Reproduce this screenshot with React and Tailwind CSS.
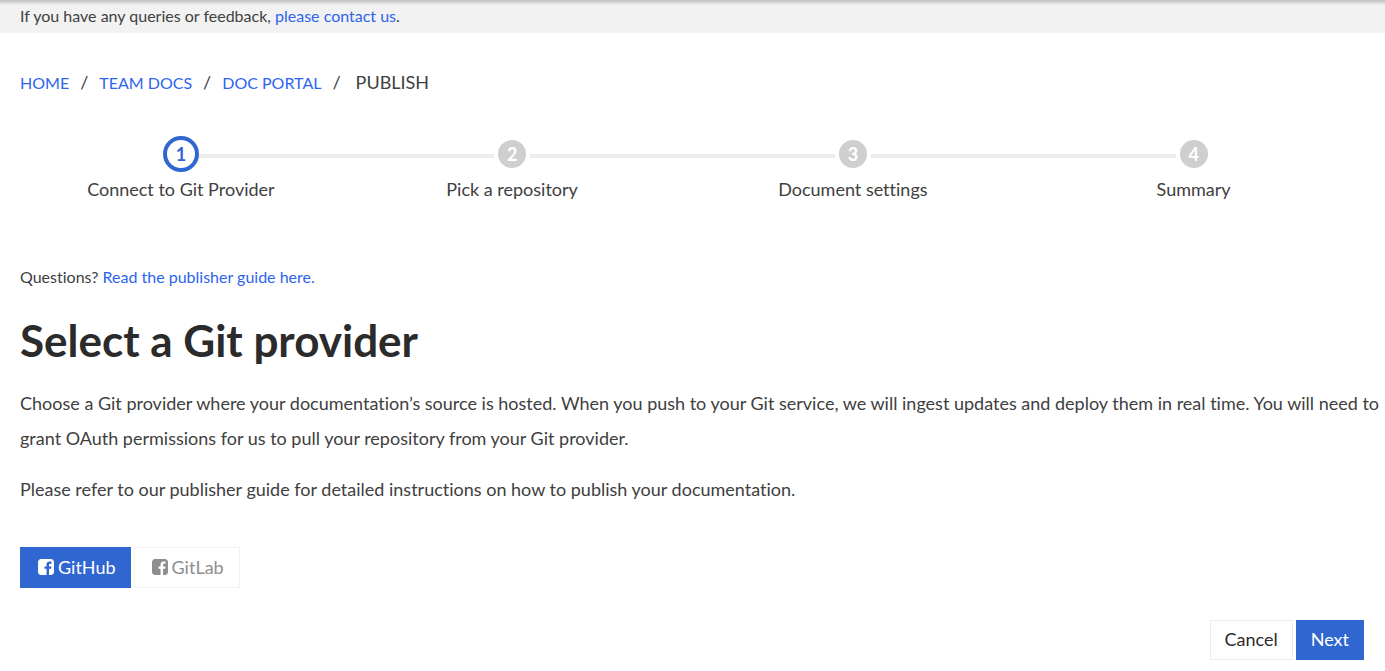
import React from "react";

const steps = [
  "Connect to Git Provider",
  "Pick a repository",
  "Document settings",
  "Summary",
];

const crumbs = ["HOME", "TEAM DOCS", "DOC PORTAL"];

function FacebookIcon() {
  return (
    <svg viewBox="0 0 1536 1536" className="h-4 w-4 shrink-0" fill="currentColor" aria-hidden="true">
      <path d="M1248 0q119 0 203.500 84.500t84.500 203.500v960q0 119-84.500 203.500t-203.500 84.500h-188v-595h199l30-232h-229v-148q0-56 23.500-84t91.500-28l122-1v-207q-63-9-178-9-136 0-217.500 80t-81.500 226v171h-200v232h200v595h-532q-119 0-203.500-84.500t-84.500-203.500v-960q0-119 84.500-203.500t203.500-84.500h960z" />
    </svg>
  );
}

function Step({ number, label, active, last }) {
  return (
    <li className="flex flex-col items-center">
      <div className="relative flex h-9 w-full items-center justify-center">
        {!last && (
          <span className="absolute top-[18px] left-1/2 h-1 w-full bg-[#ededed]" />
        )}
        <span
          className={
            active
              ? "relative z-10 flex h-9 w-9 items-center justify-center rounded-full border-4 border-[#2f66d0] bg-white text-lg leading-none font-bold text-[#2f66d0]"
              : "relative z-10 flex h-9 w-9 items-center justify-center rounded-full border-4 border-white bg-[#cfcfcf] text-lg leading-none font-bold text-white"
          }
        >
          {number}
        </span>
      </div>
      <span className="text-lg leading-[34px]">{label}</span>
    </li>
  );
}

export default function App() {
  return (
    <div className="bg-white font-['Lato',sans-serif] text-lg text-[#404040] [font-variant-ligatures:none]">
      <div className="bg-[#f2f2f2] bg-linear-to-b from-[#bdbdbd] to-[#f2f2f2] to-[5px] px-5 pb-px text-base leading-8">
        If you have any queries or feedback,{" "}
        <a href="#contact" className="text-[#2d64ee]">please contact us</a>.
      </div>
      <main className="pr-[21px] pl-5">
        <nav aria-label="Breadcrumb" className="pt-8">
          <ol className="flex items-start leading-[34px]">
            {crumbs.map((crumb) => (
              <li key={crumb} className="flex items-start">
                <a href="#crumb" className="text-base leading-9 text-[#2d64ee]">{crumb}</a>
                <span className="px-[11px]">/</span>
              </li>
            ))}
            <li className="pl-1" aria-current="page">PUBLISH</li>
          </ol>
        </nav>
        <ol className="mt-[35px] grid grid-cols-[322fr_341fr_341fr_341fr]">
          {steps.map((label, i) => (
            <Step key={label} number={i + 1} label={label} active={i === 0} last={i === steps.length - 1} />
          ))}
        </ol>
        <p className="mt-[55px] text-base leading-8">
          Questions? <a href="#guide" className="text-[#2d64ee]">Read the publisher guide here.</a>
        </p>
        <h1 className="mt-[19px] text-[44px] leading-[56px] font-bold text-[#2b2b2b]">Select a Git provider</h1>
        <p className="mt-[18px] -mr-[18px] leading-[35px]">
          Choose a Git provider where your documentation’s source is hosted. When you push to your Git service, we will ingest updates and deploy them in real time. You will need to grant OAuth permissions for us to pull your repository from your Git provider.
        </p>
        <p className="mt-4 leading-[35px]">
          Please refer to our publisher guide for detailed instructions on how to publish your documentation.
        </p>
        <div className="mt-10 flex gap-[3px]">
          <button type="button" className="flex h-[41px] items-center gap-1 bg-[#2f66d0] pr-[15px] pb-0.5 pl-[18px] text-white">
            <FacebookIcon />
            GitHub
          </button>
          <button type="button" className="flex h-[41px] items-center gap-1 border border-[#f3f3f3] pr-[15px] pb-0.5 pl-[17px] text-[#8e8e8e]">
            <FacebookIcon />
            GitLab
          </button>
        </div>
        <div className="mt-8 flex justify-end gap-[3px] pb-3">
          <button type="button" className="h-10 border border-[#ececec] px-[14px] pb-0.5 text-[#2b2b2b]">Cancel</button>
          <button type="button" className="h-10 bg-[#2f66d0] px-[15px] pb-0.5 text-white">Next</button>
        </div>
      </main>
    </div>
  );
}
